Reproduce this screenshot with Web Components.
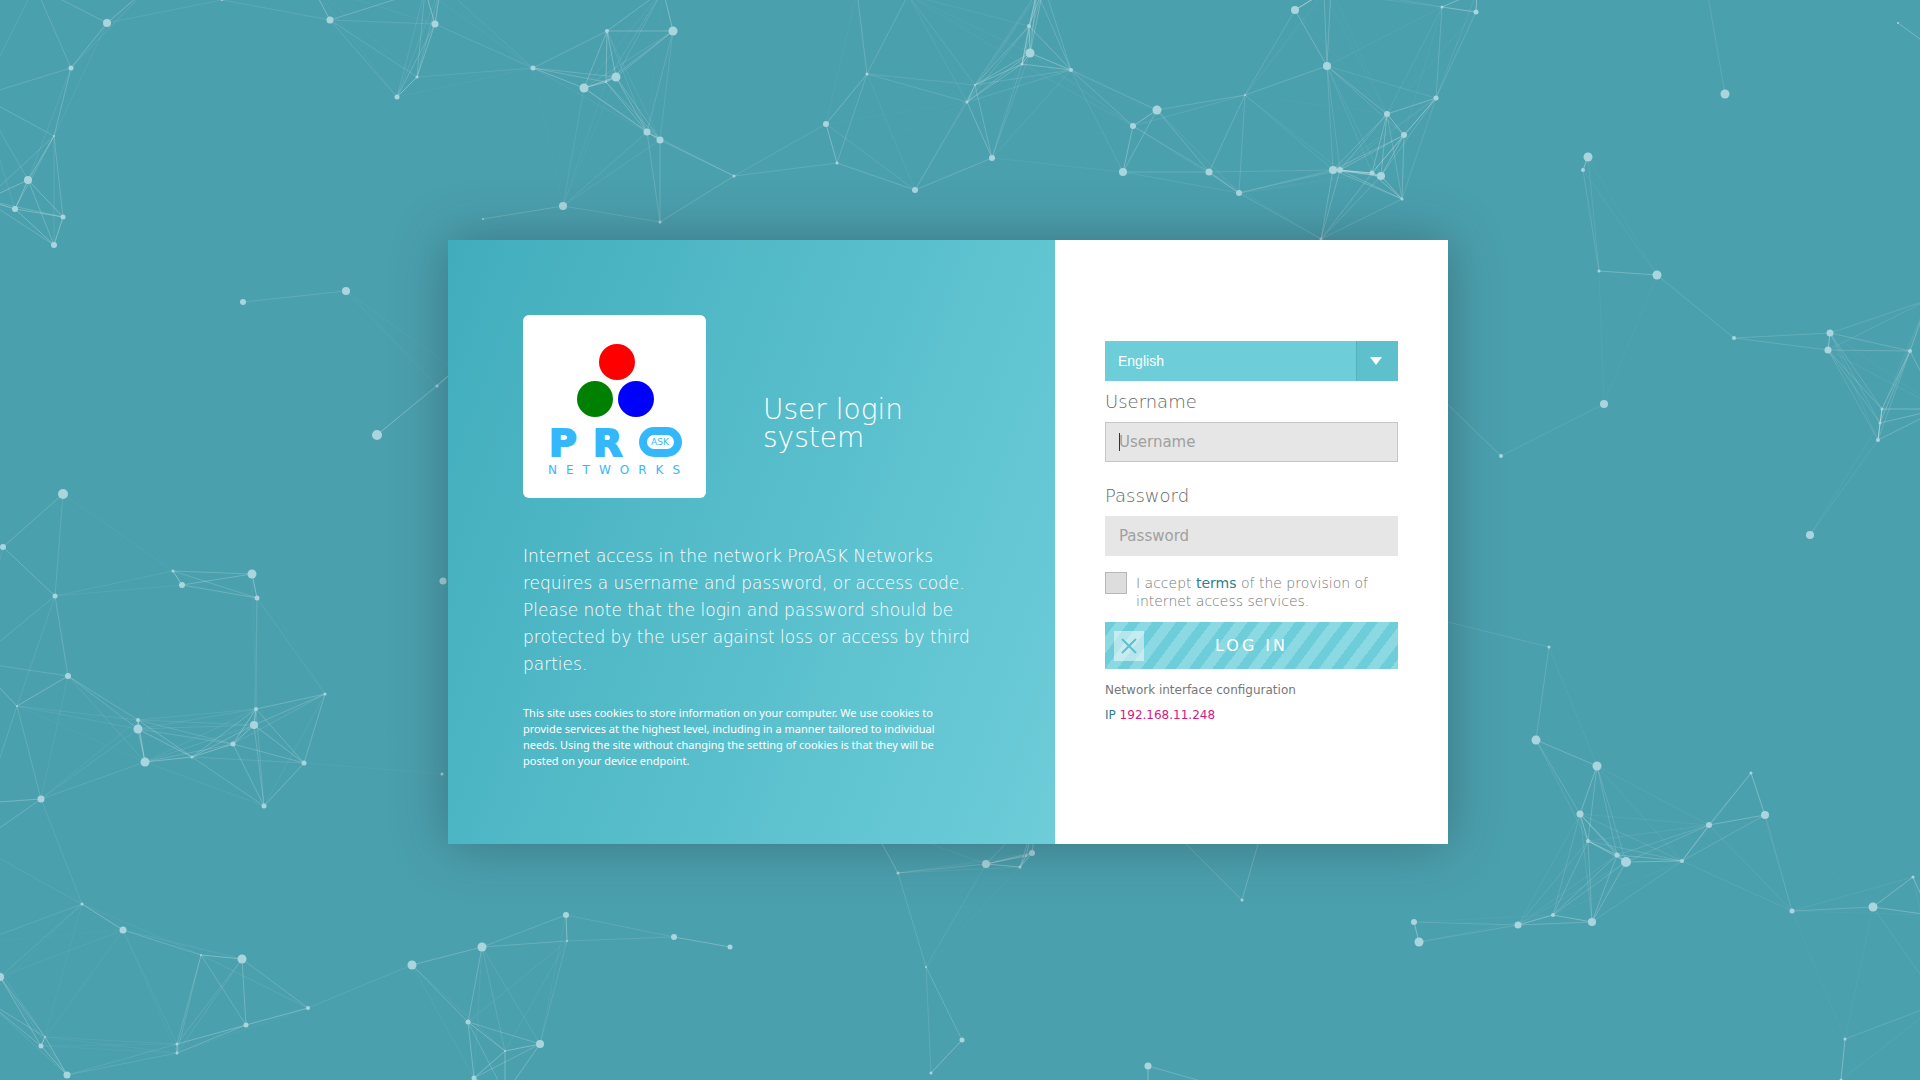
<!DOCTYPE html>
<html lang="en">
<head>
<meta charset="utf-8">
<meta name="viewport" content="width=device-width, initial-scale=1">
<title>User login system</title>
<style>
  html, body { margin: 0; min-height: 100%; }
  body { background: #4ba0ae; font-family: "DejaVu Sans", sans-serif; }
</style>
</head>
<body>
<login-page></login-page>

<script>
class ParticleField extends HTMLElement {
  connectedCallback() {
    const nodes = [
      [107,23,4],[71,68,2.5],[54,136,1],[28,180,4],[15,209,3],[63,217,2.5],[54,245,3],[222,0,1],[330,20,3.5],
      [435,24,3.5],[417,77,1.5],[397,97,2.5],[533,68,2.5],[607,31,2],[616,77,4.5],[606,82,1],[584,88,4.5],
      [563,206,4],[483,219,1],[243,302,3],[346,291,4],[437,386,1.5],[35,-14,1],[150,-14,1],[-20,96,1],[-15,200,2],
      [312,-14,1],[425,-10,1],[441,-15,1],
      [673,31,4.5],[647,132,3.5],[660,140,3.5],[734,176,1.5],[660,222,1.5],[826,124,3],[867,74,1.5],[837,163,1.5],
      [915,190,3],[992,158,3],[967,102,1.5],[975,85,1],[1022,64,1.5],[1030,53,4.5],[1029,26,2],[1071,70,2],
      [1133,126,3],[1157,110,4.5],[1123,172,4],[1209,172,3.5],[1239,193,3],[1245,95,1],[857,-8,1],[908,-5,1],
      [1037,-8,1],[1044,-14,1],[663,-10,1],
      [1295,10,4],[1327,66,4],[1442,7,1.5],[1476,12,2.5],[1436,98,2.5],[1387,114,3],[1404,135,3],[1333,170,4],
      [1340,170,3],[1372,173,2.5],[1381,176,4],[1402,199,1.5],[1321,239,1.5],[1725,94,4.5],[1588,157,4.5],
      [1583,170,2],[1599,271,1.5],[1657,275,4.5],[1734,338,2],[1830,333,3.5],[1828,350,3.5],[1910,351,2],
      [1882,409,1.5],[1880,423,1.5],[1878,440,2],[1604,404,4],[1501,456,2],[1898,23,1],[1707,-10,1],[1935,50,1],
      [1940,409,1],[1928,300,1],[1324,-8,1],[1331,-12,1],[1477,-8,1],[1440,397,1],[455,370,1],
      [377,435,5],[63,494,5],[3,547,3],[55,596,2.5],[173,571,1.5],[182,585,3],[252,574,4.5],[257,598,2.5],
      [68,676,3],[17,706,1],[138,720,2],[138,729,4.5],[145,762,4.5],[192,757,1.5],[233,744,2.5],[254,725,4],
      [256,709,2],[325,694,1.5],[304,763,2.5],[264,806,2.5],[41,799,3.5],[443,581,3.5],[442,774,1.5],
      [-25,662,1],[-15,803,1],[-25,845,1],
      [82,904,1.5],[123,930,3.5],[201,955,1],[242,959,4.5],[308,1008,2],[246,1025,2.5],[177,1044,1.5],
      [177,1053,1.5],[0,977,4],[45,1037,1],[41,1046,2.5],[67,1075,3.5],[412,965,4.5],[482,947,4.5],[566,915,3],
      [567,941,1],[674,937,3],[730,947,2.5],[468,1022,2.5],[540,1044,4],[505,1051,1],[474,1078,2.5],
      [-15,1000,1],[505,1094,1],[-20,942,1],
      [898,873,1.5],[986,864,4],[1020,867,1.5],[1032,853,3],[1026,856,1],[926,967,1],[962,1040,2.5],
      [931,1073,1.5],[1148,1066,3.5],[1242,900,1.5],[870,822,1],[1180,838,1],[1262,830,1],[1038,810,1],[1148,1092,1],[1215,1085,1],
      [1810,535,4],[1549,647,1.5],[1536,740,4.5],[1597,766,4.5],[1580,814,3.5],[1588,841,2],[1617,855,2.5],
      [1626,862,5],[1682,861,2],[1709,825,3],[1765,815,4],[1751,773,1.5],[1792,911,2.5],[1873,907,4.5],
      [1913,877,1.5],[1414,922,3],[1419,942,4.5],[1518,925,3.5],[1553,915,2],[1592,922,4],[1845,1039,1.5],
      [1841,1080,1.5],[1930,915,1],[1940,1003,1],[1440,620,1]
    ];
    const reach = 150;
    let lines = '';
    nodes.forEach(([x1, y1], i) => {
      for (const [x2, y2] of nodes.slice(i + 1)) {
        const d = Math.hypot(x1 - x2, y1 - y2);
        if (d < reach) lines += `<line x1="${x1}" y1="${y1}" x2="${x2}" y2="${y2}" opacity="${(0.38 * (1 - d / reach)).toFixed(2)}"/>`;
      }
    });
    const dots = nodes.map(([x, y, r]) => `<circle cx="${x}" cy="${y}" r="${r}"/>`).join('');
    this.attachShadow({ mode: 'open' }).innerHTML = `
      <style>
        :host { display: block; }
        svg { display: block; width: 100%; height: 100%; }
      </style>
      <svg viewBox="0 0 1920 1080" preserveAspectRatio="xMidYMid slice" aria-hidden="true">
        <g stroke="#fff" stroke-width="1">${lines}</g>
        <g fill="#a9d5de">${dots}</g>
      </svg>`;
  }
}
customElements.define('particle-field', ParticleField);

class BrandLogo extends HTMLElement {
  connectedCallback() {
    this.attachShadow({ mode: 'open' }).innerHTML = `
      <style>
        :host { display: block; flex: none; width: 183px; height: 183px; background: #fff; border-radius: 6px; }
        svg { display: block; }
        text { fill: #35b8fb; font-family: "DejaVu Sans", sans-serif; }
        .name { font-size: 38px; font-weight: 700; stroke: #35b8fb; stroke-width: 2px; }
        .sub { font-size: 12px; letter-spacing: 9px; }
        .ask { font-size: 9px; }
      </style>
      <svg viewBox="0 0 183 183" width="183" height="183" role="img" aria-label="PRO ASK Networks">
        <circle cx="94" cy="47" r="18" fill="#f00"/>
        <circle cx="72" cy="84" r="18" fill="#008000"/>
        <circle cx="113" cy="84" r="18" fill="#00f"/>
        <text class="name" y="141" x="26 70">PR</text>
        <rect x="120" y="116" width="35" height="22" rx="11" fill="#fff" stroke="#35b8fb" stroke-width="8"/>
        <text class="ask" x="137" y="130" text-anchor="middle">ASK</text>
        <text class="sub" x="25" y="159">NETWORKS</text>
      </svg>`;
  }
}
customElements.define('brand-logo', BrandLogo);

class IntroPanel extends HTMLElement {
  connectedCallback() {
    this.attachShadow({ mode: 'open' }).innerHTML = `
      <style>
        :host { display: block; box-sizing: border-box; padding: 75px 75px 75px; color: #fff;
                background: linear-gradient(110deg, #41adbc, #6dcdd9); }
        header { display: flex; align-items: center; gap: 57px; }
        h1 { margin: 0; padding-top: 34px; font-size: 28px; line-height: 28px; font-weight: 200; max-width: 200px; }
      </style>
      <header><slot name="logo"></slot><h1><slot name="title"></slot></h1></header>
      <slot></slot>`;
  }
}
customElements.define('intro-panel', IntroPanel);

class LanguageSelect extends HTMLElement {
  connectedCallback() {
    this.attachShadow({ mode: 'open' }).innerHTML = `
      <style>
        :host { display: grid; grid-template-columns: 1fr 42px; height: 40px; background: #6dcdd9; }
        select { grid-area: 1 / 1 / 2 / 3; appearance: none; width: 100%; border: 0; margin: 0; padding: 0 13px;
                 background: transparent; color: #fff; font: 14px "Liberation Sans", sans-serif; }
        span { grid-area: 1 / 2; display: grid; place-items: center; padding-right: 3px; background: #5ec0cd;
               border-left: 1px solid #55b3c0; pointer-events: none; }
      </style>
      <select aria-label="Language"><option>English</option></select>
      <span><svg width="12" height="8" viewBox="0 0 12 8" aria-hidden="true"><path d="M0 0h12L6 8z" fill="#fff"/></svg></span>`;
  }
}
customElements.define('language-select', LanguageSelect);

class TextField extends HTMLElement {
  connectedCallback() {
    const label = this.getAttribute('label');
    const type = this.getAttribute('type') || 'text';
    this.attachShadow({ mode: 'open' }).innerHTML = `
      <style>
        :host { display: grid; }
        label { font-size: 18px; line-height: 22px; font-weight: 200; color: #666; margin-bottom: 9px; }
        .box { display: grid; grid-template-columns: 1fr; height: 40px; }
        input { grid-area: 1 / 1; box-sizing: border-box; width: 100%; height: 40px; padding: 0 13px; margin: 0;
                border: 1px solid transparent; border-radius: 0; background: #e6e6e6; outline: 0;
                color: #444; font: 15px "DejaVu Sans", sans-serif; }
        input::placeholder { color: #a0a0a0; opacity: 1; }
        :host([active]) input { border-color: #c6c6c6; }
        i { display: none; grid-area: 1 / 1; align-self: center; width: 1px; height: 18px; margin-left: 14px; background: #333; z-index: 1; }
        :host([active]) i { display: block; }
      </style>
      <label for="field">${label}</label>
      <div class="box"><input id="field" type="${type}" placeholder="${label}"><i></i></div>`;
  }
}
customElements.define('text-field', TextField);

class AcceptTerms extends HTMLElement {
  connectedCallback() {
    this.attachShadow({ mode: 'open' }).innerHTML = `
      <style>
        :host { display: flex; align-items: flex-start; gap: 9px; }
        input { appearance: none; flex: none; box-sizing: border-box; width: 22px; height: 22px; margin: 0;
                background: #ddd; border: 1px solid #b8b8b8; }
        label { font-size: 14px; line-height: 18px; font-weight: 200; color: #777; padding-top: 2px; }
        a { color: #2d7f8c; text-decoration: none; font-weight: 400; }
      </style>
      <input type="checkbox" id="ok">
      <label for="ok">I accept <a href="#terms">terms</a> of the provision of internet access services.</label>`;
  }
}
customElements.define('accept-terms', AcceptTerms);

class LoginButton extends HTMLElement {
  connectedCallback() {
    this.attachShadow({ mode: 'open' }).innerHTML = `
      <style>
        :host { display: block; }
        button { display: grid; grid-template-columns: 30px 1fr 30px; align-items: center; width: 100%; height: 47px; border: 0;
                 margin: 0; padding: 0 9px; color: #fff; font: 16px "DejaVu Sans", sans-serif; letter-spacing: 3px;
                 background: repeating-linear-gradient(127deg, #6dcdd9 0 9px, #8bdae3 9px 19px); }
        .mark { display: grid; place-items: center; width: 30px; height: 30px; background: rgba(255,255,255,.5); }
      </style>
      <button type="submit">
        <span class="mark"><svg width="16" height="16" viewBox="0 0 16 16" aria-hidden="true"><path d="M1 1l14 14M15 1L1 15" stroke="#5fc0cd" stroke-width="2" fill="none"/></svg></span>
        <span><slot></slot></span>
      </button>`;
  }
}
customElements.define('login-button', LoginButton);

class LoginPanel extends HTMLElement {
  connectedCallback() {
    this.attachShadow({ mode: 'open' }).innerHTML = `
      <style>
        :host { display: flex; flex-direction: column; justify-content: center; box-sizing: border-box; padding: 0 50px 15px; background: #fff; }
        form { display: flex; flex-direction: column; }
        .user { margin-top: 10px; }
        .pass { margin-top: 23px; }
        accept-terms { margin-top: 16px; }
        login-button { margin-top: 12px; }
        p { margin: 0; font-size: 12px; line-height: 25px; color: #777; }
        p.first { margin-top: 9px; }
        p span { color: #2d7f8c; }
        p b { color: #d6187f; font-weight: 400; }
      </style>
      <form>
        <language-select></language-select>
        <text-field class="user" label="Username" active></text-field>
        <text-field class="pass" label="Password" type="password"></text-field>
        <accept-terms></accept-terms>
        <login-button>LOG IN</login-button>
      </form>
      <p class="first">Network interface configuration</p>
      <p><span>IP</span> <b>192.168.11.248</b></p>`;
  }
}
customElements.define('login-panel', LoginPanel);

class LoginPage extends HTMLElement {
  connectedCallback() {
    this.attachShadow({ mode: 'open' }).innerHTML = `
      <style>
        :host { display: grid; min-height: 100vh; }
        particle-field { grid-area: 1 / 1; height: 100vh; min-width: 0; }
        main { grid-area: 1 / 1; display: grid; place-items: center; padding: 4px 24px 0 0; z-index: 1; }
        article { display: grid; grid-template-columns: 607fr 393fr; width: 100%; max-width: 1000px;
                  box-shadow: 0 0 50px rgba(40,50,60,.4); }
        .lead { margin: 45px 0 0; font-size: 17px; line-height: 27px; font-weight: 200; }
        .cookies { margin: 27px 0 0; font: 11px/16px "Noto Sans", sans-serif; max-width: 430px; }
      </style>
      <particle-field></particle-field>
      <main>
        <article>
          <intro-panel>
            <brand-logo slot="logo"></brand-logo>
            <span slot="title">User login system</span>
            <p class="lead">Internet access in the network ProASK Networks requires a username and password, or access code. Please note that the login and password should be protected by the user against loss or access by third parties.</p>
            <p class="cookies">This site uses cookies to store information on your computer. We use cookies to provide services at the highest level, including in a manner tailored to individual needs. Using the site without changing the setting of cookies is that they will be posted on your device endpoint.</p>
          </intro-panel>
          <login-panel></login-panel>
        </article>
      </main>`;
  }
}
customElements.define('login-page', LoginPage);
</script>
</body>
</html>
